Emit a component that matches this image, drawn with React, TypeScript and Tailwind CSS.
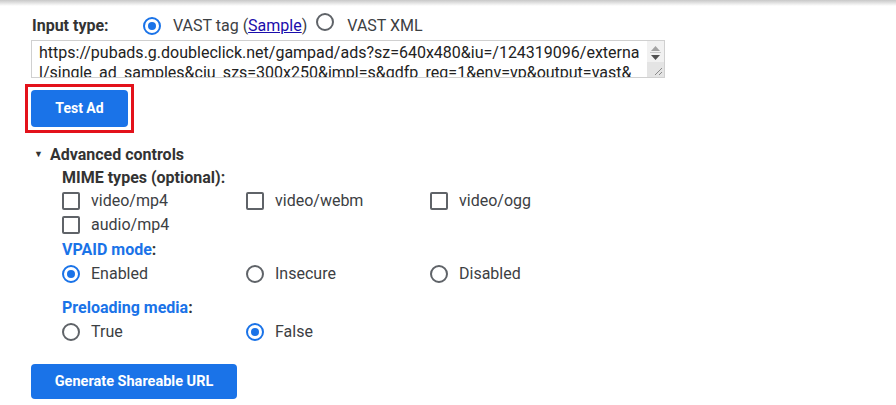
import React from "react";

const font = { fontFamily: "Roboto, 'Liberation Sans', sans-serif" };

function Radio({ checked }: { checked?: boolean }) {
  return (
    <span
      className={
        "inline-flex h-[18px] w-[18px] shrink-0 items-center justify-center rounded-full border-2 " +
        (checked ? "border-[#1a73e8]" : "border-[#5f6368]")
      }
    >
      {checked && <span className="h-[8px] w-[8px] rounded-full bg-[#1a73e8]" />}
    </span>
  );
}

function Box() {
  return <span className="inline-block h-[18px] w-[18px] shrink-0 rounded-[2px] border-2 border-[#5f6368]" />;
}

function Opt({ kind, checked, label }: { kind: "radio" | "box"; checked?: boolean; label: string }) {
  return (
    <div className="flex w-[184px] items-center gap-[11px]">
      {kind === "radio" ? <Radio checked={checked} /> : <Box />}
      <span className="text-[16px] text-[#3c4043]">{label}</span>
    </div>
  );
}

export default function App() {
  return (
    <div className="h-[405px] w-[896px] overflow-hidden bg-white text-[#333]" style={font}>
      <div className="h-[6px] bg-gradient-to-b from-[#c8c8c8] to-white" />
      <div className="pl-[31px]">
        <div className="flex h-[34px] items-center pt-[5px]">
          <span className="w-[112px] pl-[1px] text-[16px] font-bold text-[#333]">Input type:</span>
          <Radio checked />
          <span className="ml-[12px] text-[16px] text-[#3c4043]">
            VAST tag (<a className="text-[#1a0dab] underline">Sample</a>)
          </span>
          <span className="ml-[9px]"><Radio /></span>
          <span className="ml-[13px] text-[16px] text-[#3c4043]">VAST XML</span>
        </div>
        <div className="relative h-[38px] w-[634px] overflow-hidden border border-[#d0d0d0]">
          <div className="whitespace-nowrap pl-[7px] pt-[2px] text-[16px] leading-[20px] text-[#222]">
            <div>https://pubads.g.doubleclick.net/gampad/ads?sz=640x480&amp;iu=/124319096/externa</div>
            <div>l/single_ad_samples&amp;ciu_szs=300x250&amp;impl=s&amp;gdfp_req=1&amp;env=vp&amp;output=vast&amp;</div>
          </div>
          <div className="absolute right-0 top-0 flex h-full w-[17px] flex-col bg-[#f1f1f1]">
            <div className="flex h-[11px] items-end justify-center pb-[1px]">
              <svg width="9" height="5" viewBox="0 0 9 5"><path d="M0 5 L4.5 0 L9 5 Z" fill="#a3a3a3" /></svg>
            </div>
            <div className="mx-[3px] h-px bg-[#c8c8c8]" />
            <div className="flex h-[9px] items-start justify-center pt-[2px]">
              <svg width="9" height="5" viewBox="0 0 9 5"><path d="M0 0 L4.5 5 L9 0 Z" fill="#505050" /></svg>
            </div>
            <div className="relative flex-1 bg-[#e4e4e4]">
              <svg className="absolute bottom-[1px] right-[1px]" width="10" height="10" viewBox="0 0 10 10">
                <path d="M9 2 L2 9 M9 6 L6 9" stroke="#8a8a8a" strokeWidth="1" />
              </svg>
            </div>
          </div>
        </div>
        <div className="ml-[-6px] mt-[6px] inline-block border-[3px] border-[#e3121b] p-[3px]">
          <button className="block h-[37px] w-[97px] rounded-[4px] bg-[#1a73e8] text-[14px] font-bold text-white">
            Test Ad
          </button>
        </div>
        <div className="mt-[10px] flex h-[24px] items-center">
          <span className="ml-[3px] w-[16px] text-[9px] text-[#333]">▼</span>
          <span className="text-[16px] font-bold text-[#333]">Advanced controls</span>
        </div>
        <div className="pl-[31px]">
          <div className="flex h-[22px] items-center text-[16px] font-bold text-[#333]">MIME types (optional):</div>
          <div className="flex h-[24px] items-center">
            <Opt kind="box" label="video/mp4" />
            <Opt kind="box" label="video/webm" />
            <Opt kind="box" label="video/ogg" />
          </div>
          <div className="flex h-[24px] items-center">
            <Opt kind="box" label="audio/mp4" />
          </div>
          <div className="mt-[1px] flex h-[23px] items-center text-[16px] font-bold">
            <span className="text-[#1a73e8]">VPAID mode</span>
            <span className="text-[#333]">:</span>
          </div>
          <div className="flex h-[26px] items-center">
            <Opt kind="radio" checked label="Enabled" />
            <Opt kind="radio" label="Insecure" />
            <Opt kind="radio" label="Disabled" />
          </div>
          <div className="mt-[9px] flex h-[23px] items-center text-[16px] font-bold">
            <span className="text-[#1a73e8]">Preloading media</span>
            <span className="text-[#333]">:</span>
          </div>
          <div className="flex h-[26px] items-center">
            <Opt kind="radio" label="True" />
            <Opt kind="radio" checked label="False" />
          </div>
        </div>
        <button className="mt-[19px] block h-[35px] w-[206px] rounded-[4px] bg-[#1a73e8] text-[14.5px] font-bold text-white">
          Generate Shareable URL
        </button>
      </div>
    </div>
  );
}
